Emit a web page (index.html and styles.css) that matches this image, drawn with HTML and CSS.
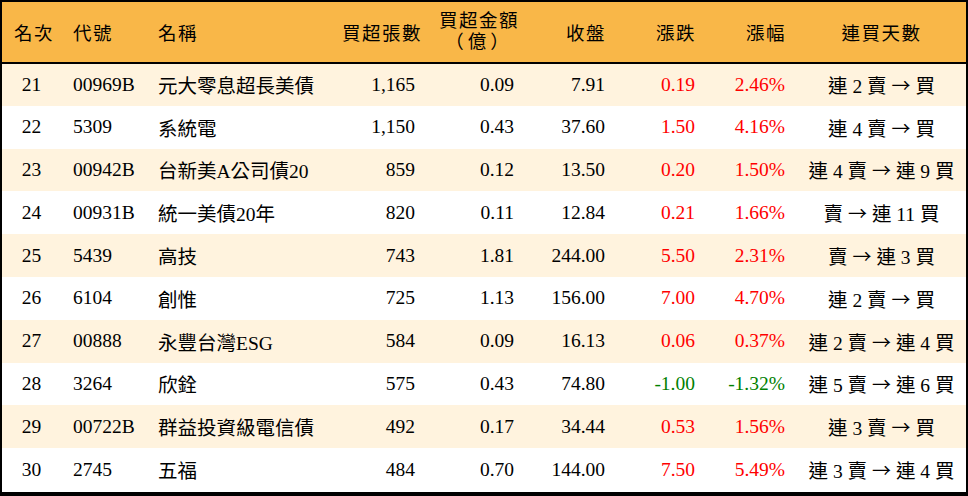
FILE: index.html
```html
<!DOCTYPE html>
<html lang="zh-Hant">
<head>
<meta charset="utf-8">
<link rel="stylesheet" href="styles.css">
</head>
<body>
<div class="frame">
<table class="rank">
<colgroup>
<col class="c-rank"><col class="c-code"><col class="c-name"><col class="c-vol"><col class="c-amt"><col class="c-close"><col class="c-chg"><col class="c-pct"><col class="c-days">
</colgroup>
<thead>
<tr>
<th class="center">名次</th>
<th class="left">代號</th>
<th class="left">名稱</th>
<th class="right">買超張數</th>
<th class="right"><span class="two">買超金額<br><span class="paren">（億）</span></span></th>
<th class="right">收盤</th>
<th class="right">漲跌</th>
<th class="right">漲幅</th>
<th class="center">連買天數</th>
</tr>
</thead>
<tbody>
<tr class="odd"><td class="center">21</td><td class="left">00969B</td><td class="left">元大零息超長美債</td><td class="right">1,165</td><td class="right">0.09</td><td class="right">7.91</td><td class="right up">0.19</td><td class="right up">2.46%</td><td class="center">連 2 賣 <span class="arr">→</span> 買</td></tr>
<tr><td class="center">22</td><td class="left">5309</td><td class="left">系統電</td><td class="right">1,150</td><td class="right">0.43</td><td class="right">37.60</td><td class="right up">1.50</td><td class="right up">4.16%</td><td class="center">連 4 賣 <span class="arr">→</span> 買</td></tr>
<tr class="odd"><td class="center">23</td><td class="left">00942B</td><td class="left">台新美A公司債20</td><td class="right">859</td><td class="right">0.12</td><td class="right">13.50</td><td class="right up">0.20</td><td class="right up">1.50%</td><td class="center">連 4 賣 <span class="arr">→</span> 連 9 買</td></tr>
<tr><td class="center">24</td><td class="left">00931B</td><td class="left">統一美債20年</td><td class="right">820</td><td class="right">0.11</td><td class="right">12.84</td><td class="right up">0.21</td><td class="right up">1.66%</td><td class="center">賣 <span class="arr">→</span> 連 11 買</td></tr>
<tr class="odd"><td class="center">25</td><td class="left">5439</td><td class="left">高技</td><td class="right">743</td><td class="right">1.81</td><td class="right">244.00</td><td class="right up">5.50</td><td class="right up">2.31%</td><td class="center">賣 <span class="arr">→</span> 連 3 買</td></tr>
<tr><td class="center">26</td><td class="left">6104</td><td class="left">創惟</td><td class="right">725</td><td class="right">1.13</td><td class="right">156.00</td><td class="right up">7.00</td><td class="right up">4.70%</td><td class="center">連 2 賣 <span class="arr">→</span> 買</td></tr>
<tr class="odd"><td class="center">27</td><td class="left">00888</td><td class="left">永豐台灣ESG</td><td class="right">584</td><td class="right">0.09</td><td class="right">16.13</td><td class="right up">0.06</td><td class="right up">0.37%</td><td class="center">連 2 賣 <span class="arr">→</span> 連 4 買</td></tr>
<tr><td class="center">28</td><td class="left">3264</td><td class="left">欣銓</td><td class="right">575</td><td class="right">0.43</td><td class="right">74.80</td><td class="right down">-1.00</td><td class="right down">-1.32%</td><td class="center">連 5 賣 <span class="arr">→</span> 連 6 買</td></tr>
<tr class="odd"><td class="center">29</td><td class="left">00722B</td><td class="left">群益投資級電信債</td><td class="right">492</td><td class="right">0.17</td><td class="right">34.44</td><td class="right up">0.53</td><td class="right up">1.56%</td><td class="center">連 3 賣 <span class="arr">→</span> 買</td></tr>
<tr><td class="center">30</td><td class="left">2745</td><td class="left">五福</td><td class="right">484</td><td class="right">0.70</td><td class="right">144.00</td><td class="right up">7.50</td><td class="right up">5.49%</td><td class="center">連 3 賣 <span class="arr">→</span> 連 4 買</td></tr>
</tbody>
</table>
</div>
</body>
</html>
```

FILE: styles.css
```css
html, body {
  margin: 0;
  padding: 0;
  background: #ffffff;
}

.frame {
  width: 964px;
  height: 490px;
  border-top: 2px solid #000;
  border-left: 2px solid #000;
  border-right: 2px solid #000;
  border-bottom: 4px solid #000;
  overflow: hidden;
  background: #ffffff;
}

.rank {
  width: 964px;
  table-layout: fixed;
  border-collapse: collapse;
  border-spacing: 0;
  font-family: "Liberation Serif", "Noto Sans CJK TC", serif;
  font-size: 19.5px;
  color: #000;
}

.c-rank { width: 59px; }
.c-code { width: 85px; }
.c-name { width: 184px; }
.c-vol { width: 97px; }
.c-amt { width: 99px; }
.c-close { width: 91px; }
.c-chg { width: 90px; }
.c-pct { width: 90px; }
.c-days { width: 169px; }

.rank thead tr {
  background: #f9b748;
  height: 60px;
}

.rank thead th {
  font-weight: normal;
  font-size: 18.5px;
  height: 60px;
  padding: 0 12px;
  border-bottom: 2px solid #000;
  vertical-align: middle;
  white-space: nowrap;
  letter-spacing: 1.5px;
}

.rank thead th.right {
  padding-right: 11px;
}

.two {
  display: inline-block;
  text-align: center;
  line-height: 21px;
}

.paren {
  letter-spacing: 4px;
}

.rank tbody tr {
  height: 42.8px;
}

.rank tbody tr.odd {
  background: #fff3de;
}

.rank td {
  padding: 0 12px;
  white-space: nowrap;
  vertical-align: middle;
}

.arr {
  font-family: "Noto Sans CJK TC", sans-serif;
  font-size: 19px;
}

.left { text-align: left; }
.right { text-align: right; }
.center { text-align: center; }

th.center, td.center {
  padding: 0;
}

.up { color: #ff0000; }
.down { color: #008000; }
```
